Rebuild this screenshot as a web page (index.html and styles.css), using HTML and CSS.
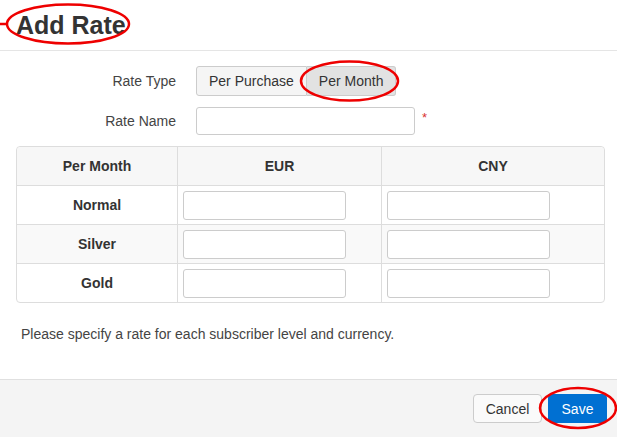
FILE: index.html
```html
<!DOCTYPE html>
<html>
<head>
<meta charset="utf-8">
<link rel="stylesheet" href="styles.css">
</head>
<body>
<div class="page">
  <header class="head">
    <h1 class="title">Add Rate</h1>
  </header>
  <main class="body">
    <div class="form">
      <label class="lbl">Rate Type</label>
      <div class="btn-group">
        <button class="seg">Per Purchase</button>
        <button class="seg active">Per Month</button>
      </div>
      <label class="lbl">Rate Name</label>
      <div class="name-row">
        <input class="txt name" type="text">
        <span class="req">*</span>
      </div>
    </div>
    <table class="rates">
      <thead>
        <tr><th class="c1">Per Month</th><th class="c2">EUR</th><th class="c3">CNY</th></tr>
      </thead>
      <tbody>
        <tr><th>Normal</th><td><input class="txt cell" type="text"></td><td><input class="txt cell" type="text"></td></tr>
        <tr class="alt"><th>Silver</th><td><input class="txt cell" type="text"></td><td><input class="txt cell" type="text"></td></tr>
        <tr><th>Gold</th><td><input class="txt cell" type="text"></td><td><input class="txt cell" type="text"></td></tr>
      </tbody>
    </table>
    <p class="hint">Please specify a rate for each subscriber level and currency.</p>
  </main>
  <footer class="foot">
    <button class="btn cancel">Cancel</button>
    <button class="btn primary">Save</button>
  </footer>
  <svg class="marks" width="617" height="437" viewBox="0 0 617 437">
    <line x1="0" y1="24" x2="8" y2="24"/>
    <ellipse cx="68" cy="24" rx="61" ry="19.5"/>
    <ellipse cx="349.5" cy="81" rx="48.5" ry="19.5"/>
    <ellipse cx="578" cy="408" rx="38" ry="20"/>
  </svg>
</div>
</body>
</html>
```
FILE: styles.css
```css
* { box-sizing: border-box; }
html, body { margin: 0; padding: 0; }
body {
  font-family: "Liberation Sans", Arial, sans-serif;
  font-size: 14px;
  color: #333;
  background: #fff;
}
.page {
  position: relative;
  height: 437px;
  display: flex;
  flex-direction: column;
  overflow: hidden;
}
.head {
  padding: 10px 16px;
  border-bottom: 1px solid #e5e5e5;
}
.title {
  margin: 0;
  font-size: 25px;
  line-height: 30px;
  font-weight: bold;
  color: #333;
}
.body {
  flex: 1;
  padding: 15px 12px 0 16px;
}
.form {
  display: grid;
  grid-template-columns: 160px auto;
  column-gap: 20px;
  row-gap: 11px;
  align-items: center;
  margin-bottom: 11px;
}
.lbl {
  text-align: right;
  color: #444;
}
.btn-group { display: flex; }
.seg {
  font: inherit;
  color: #333;
  height: 30px;
  padding: 0 12px;
  border: 1px solid #ccc;
  background: #f5f5f5;
  margin: 0;
}
.seg:first-child { border-radius: 3px 0 0 3px; }
.seg.active {
  background: #e2e2e2;
  border-left: none;
  border-radius: 0 3px 3px 0;
}
.name-row { display: flex; align-items: center; }
.txt {
  font: inherit;
  height: 28px;
  border: 1px solid #ccc;
  border-radius: 3px;
  background: #fff;
  padding: 0 6px;
  margin: 0;
}
.name { width: 219px; }
.req { color: #d9322f; margin-left: 7px; position: relative; top: -4px; font-size: 13px; }
.rates {
  width: 100%;
  border-collapse: separate;
  border-spacing: 0;
  border: 1px solid #ddd;
  border-radius: 4px;
}
.rates th, .rates td {
  border-left: 1px solid #ddd;
  border-top: 1px solid #ddd;
  height: 39px;
  padding: 0 5px;
}
.rates tr > :first-child { border-left: none; }
.rates thead th { border-top: none; background: #f7f7f7; height: 38px; font-weight: bold; }
.rates th { text-align: center; font-weight: bold; color: #333; }
.rates .c1 { width: 160px; }
.rates .c2 { width: 204px; }
.rates thead th.c1 { border-radius: 4px 0 0 0; }
.rates thead th.c3 { border-radius: 0 4px 0 0; }
.rates tr.alt th, .rates tr.alt td { background: #f9f9f9; }
.cell { width: 163px; height: 29px; display: block; }
.hint {
  margin: 21px 0 0 5px;
  line-height: 20px;
  color: #444;
}
.foot {
  border-top: 1px solid #e0e0e0;
  background: #f4f4f4;
  height: 58px;
  padding: 14px 10px 0 0;
  display: flex;
  justify-content: flex-end;
  align-items: flex-start;
  gap: 6px;
}
.btn {
  font: inherit;
  height: 29px;
  padding: 0;
  border: 1px solid #ccc;
  border-radius: 4px;
  background: #fafafa;
  color: #333;
}
.btn.cancel { width: 69px; }
.btn.primary {
  width: 59px;
  background: #0070d2;
  border-color: #0070d2;
  color: #fff;
}
.marks {
  position: absolute;
  left: 0;
  top: 0;
  pointer-events: none;
}
.marks line, .marks ellipse {
  fill: none;
  stroke: #ee0000;
  stroke-width: 2.5;
}
```
